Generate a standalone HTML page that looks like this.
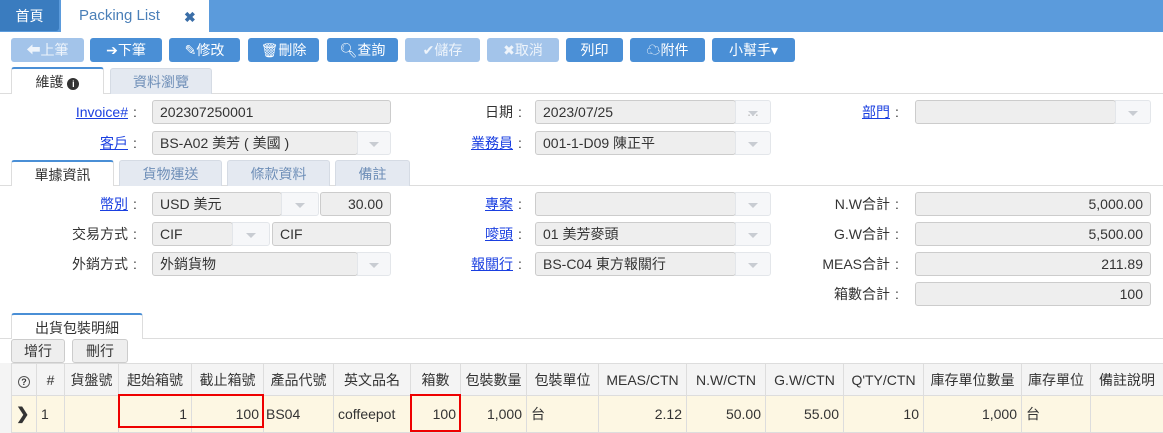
<!DOCTYPE html><html><head><meta charset="utf-8"><style>
*{box-sizing:border-box;margin:0;padding:0}
body{width:1163px;height:433px;overflow:hidden;background:#fff;font-family:"Liberation Sans","Noto Sans CJK TC",sans-serif;font-size:14px;color:#333;position:relative}
.a{position:absolute}
.btn{position:absolute;top:38px;height:24px;background:#4a8fd6;color:#fff;border-radius:3px;text-align:center;line-height:24px;font-size:14px}
.btn.d{background:#a3c4ea;color:#eef4fb}
.lbl{position:absolute;text-align:right;width:142px;line-height:24px;white-space:nowrap}
.lbl .c{display:inline-block;width:14px;text-align:center}
.lbl a{color:#1a3fe0;text-decoration:underline}
.inp{position:absolute;height:24px;background:#eee;border:1px solid #ccc;border-radius:3px;line-height:22px;padding:0 7px;white-space:nowrap;overflow:hidden}
.dd{position:absolute;height:24px;border:1px solid #e3e6ea;background:#f6f7f9;border-radius:0 3px 3px 0}
.dd:after{content:"";position:absolute;left:50%;top:10px;margin-left:-5px;border:5px solid transparent;border-top:5px solid #c8ccd2}
.r{text-align:right}
.tab{position:absolute;height:26px;background:#e4e9f1;border:1px solid #d5dbe4;border-bottom:none;border-radius:3px 3px 0 0;text-align:center;line-height:26px;color:#6f8fb8}
.tab.on{background:#fff;color:#333;border-top:2px solid #4a8fd6;border-left:1px solid #ddd;border-right:1px solid #ddd}
.hl{position:absolute;left:0;width:1163px;height:1px;background:#ddd}
table{position:absolute;left:11px;top:363px;border-collapse:collapse;width:1152px;table-layout:fixed}
td,th{border:1px solid #ddd;height:33px;white-space:nowrap;overflow:hidden;padding:0 4px}
th{background:#f4f4f4;font-weight:normal;text-align:center;height:32px}
tr.b td{background:#fdf7e3;height:37px}
.q{display:inline-block;width:12px;height:12px;border:1.5px solid #555;border-radius:50%;font-size:9px;line-height:10px;font-weight:bold;text-align:center}
</style></head><body>
<div class="a" style="left:0;top:0;width:1163px;height:32px;background:#5b9bdc"></div>
<div class="a" style="left:0;top:0;width:59px;height:31px;background:#3a7cbf;border-radius:0 0 3px 0;color:#fff;line-height:32px;text-align:center">首頁</div>
<div class="a" style="left:61px;top:0;width:148px;height:32px;background:#fff"></div>
<div class="a" style="left:79px;top:0;line-height:32px;color:#4a7fb8;font-size:15px">Packing List</div>
<div class="a" style="left:184px;top:0;line-height:34px;color:#3a6ea8;font-weight:bold;font-size:14px">✖</div>

<div class="btn d" style="left:11px;width:73px">⬅上筆</div>
<div class="btn" style="left:90px;width:72px">➔下筆</div>
<div class="btn" style="left:169px;width:71px">✎修改</div>
<div class="btn" style="left:248px;width:71px">🗑刪除</div>
<div class="btn" style="left:327px;width:71px">🔍︎查詢</div>
<div class="btn d" style="left:405px;width:75px">✔儲存</div>
<div class="btn d" style="left:487px;width:72px">✖取消</div>
<div class="btn" style="left:566px;width:57px">列印</div>
<div class="btn" style="left:630px;width:75px">☁附件</div>
<div class="btn" style="left:712px;width:83px">小幫手▾</div>

<div class="hl" style="top:93px"></div>
<div class="tab on" style="left:11px;top:67px;width:93px;height:27px">維護 <span class="q" style="background:#333;color:#fff;border-color:#333">i</span></div>
<div class="tab" style="left:110px;top:68px;width:102px">資料瀏覽</div>

<div class="lbl" style="left:0;top:100px"><a>Invoice#</a><span class="c">:</span></div>
<div class="inp" style="left:152px;top:100px;width:239px">202307250001</div>
<div class="lbl" style="left:0;top:131px"><a>客戶</a><span class="c">:</span></div>
<div class="inp" style="left:152px;top:131px;width:206px">BS-A02 美芳 ( 美國 )</div><div class="dd" style="left:357px;top:131px;width:34px"></div>
<div class="lbl" style="left:385px;top:100px">日期<span class="c">:</span></div>
<div class="inp" style="left:535px;top:100px;width:201px">2023/07/25</div><div class="dd" style="left:735px;top:100px;width:36px;color:#bbb;text-align:center;line-height:20px">...</div>
<div class="lbl" style="left:385px;top:131px"><a>業務員</a><span class="c">:</span></div>
<div class="inp" style="left:535px;top:131px;width:201px">001-1-D09 陳正平</div><div class="dd" style="left:735px;top:131px;width:36px"></div>
<div class="lbl" style="left:762px;top:100px"><a>部門</a><span class="c">:</span></div>
<div class="inp" style="left:915px;top:100px;width:201px"></div><div class="dd" style="left:1115px;top:100px;width:36px"></div>

<div class="hl" style="top:185px"></div>
<div class="tab on" style="left:11px;top:160px;width:103px">單據資訊</div>
<div class="tab" style="left:119px;top:160px;width:103px">貨物運送</div>
<div class="tab" style="left:227px;top:160px;width:103px">條款資料</div>
<div class="tab" style="left:335px;top:160px;width:75px">備註</div>

<div class="lbl" style="left:0;top:192px"><a>幣別</a><span class="c">:</span></div>
<div class="inp" style="left:152px;top:192px;width:130px">USD 美元</div><div class="dd" style="left:281px;top:192px;width:38px"></div>
<div class="inp r" style="left:320px;top:192px;width:71px">30.00</div>
<div class="lbl" style="left:0;top:222px">交易方式<span class="c">:</span></div>
<div class="inp" style="left:152px;top:222px;width:81px">CIF</div><div class="dd" style="left:232px;top:222px;width:38px"></div>
<div class="inp" style="left:272px;top:222px;width:119px">CIF</div>
<div class="lbl" style="left:0;top:252px">外銷方式<span class="c">:</span></div>
<div class="inp" style="left:152px;top:252px;width:206px">外銷貨物</div><div class="dd" style="left:357px;top:252px;width:34px"></div>

<div class="lbl" style="left:385px;top:192px"><a>專案</a><span class="c">:</span></div>
<div class="inp" style="left:535px;top:192px;width:201px"></div><div class="dd" style="left:735px;top:192px;width:36px"></div>
<div class="lbl" style="left:385px;top:222px"><a>嘜頭</a><span class="c">:</span></div>
<div class="inp" style="left:535px;top:222px;width:201px">01 美芳麥頭</div><div class="dd" style="left:735px;top:222px;width:36px"></div>
<div class="lbl" style="left:385px;top:252px"><a>報關行</a><span class="c">:</span></div>
<div class="inp" style="left:535px;top:252px;width:201px">BS-C04 東方報關行</div><div class="dd" style="left:735px;top:252px;width:36px"></div>

<div class="lbl" style="left:762px;top:192px">N.W合計<span class="c">:</span></div><div class="inp r" style="left:915px;top:192px;width:236px">5,000.00</div>
<div class="lbl" style="left:762px;top:222px">G.W合計<span class="c">:</span></div><div class="inp r" style="left:915px;top:222px;width:236px">5,500.00</div>
<div class="lbl" style="left:762px;top:252px">MEAS合計<span class="c">:</span></div><div class="inp r" style="left:915px;top:252px;width:236px">211.89</div>
<div class="lbl" style="left:762px;top:282px">箱數合計<span class="c">:</span></div><div class="inp r" style="left:915px;top:282px;width:236px">100</div>

<div class="hl" style="top:338px"></div>
<div class="tab on" style="left:11px;top:313px;width:132px;height:26px;color:#333">出貨包裝明細</div>
<div class="a" style="left:11px;top:339px;width:54px;height:24px;background:#eee;border:1px solid #ccc;border-radius:3px;text-align:center;line-height:22px">增行</div>
<div class="a" style="left:72px;top:339px;width:56px;height:24px;background:#eee;border:1px solid #ccc;border-radius:3px;text-align:center;line-height:22px">刪行</div>

<table style="left:11px">
<colgroup><col style="width:25px"><col style="width:28px"><col style="width:54px"><col style="width:73px"><col style="width:72px"><col style="width:70px"><col style="width:77px"><col style="width:50px"><col style="width:66px"><col style="width:72px"><col style="width:88px"><col style="width:79px"><col style="width:78px"><col style="width:80px"><col style="width:98px"><col style="width:69px"><col style="width:73px"></colgroup>
<tr><th><span class="q">?</span></th><th>#</th><th>貨盤號</th><th>起始箱號</th><th>截止箱號</th><th>產品代號</th><th>英文品名</th><th>箱數</th><th>包裝數量</th><th>包裝單位</th><th>MEAS/CTN</th><th>N.W/CTN</th><th>G.W/CTN</th><th>Q'TY/CTN</th><th>庫存單位數量</th><th>庫存單位</th><th>備註說明</th></tr>
<tr class="b"><td style="font-weight:bold;font-size:16px">❯</td><td>1</td><td></td><td class="r">1</td><td class="r">100</td><td style="padding:0 2px">BS04</td><td>coffeepot</td><td class="r">100</td><td class="r">1,000</td><td>台</td><td class="r">2.12</td><td class="r">50.00</td><td class="r">55.00</td><td class="r">10</td><td class="r">1,000</td><td>台</td><td></td></tr>
</table>
<div class="a" style="left:0;top:363px;width:12px;height:70px;border-right:1px solid #ddd;background:#f4f4f4"></div>
<div class="a" style="left:118px;top:394px;width:146px;height:34px;border:2px solid #e00"></div>
<div class="a" style="left:410px;top:394px;width:51px;height:38px;border:2px solid #e00"></div>
</body></html>
